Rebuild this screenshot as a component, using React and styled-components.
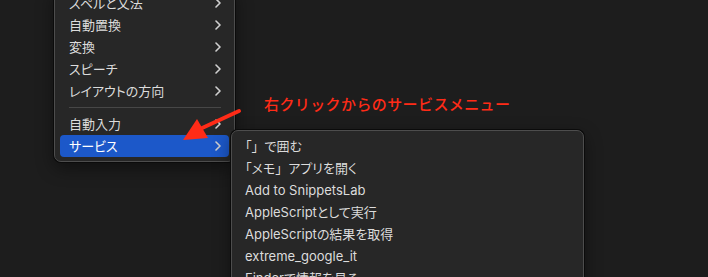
import styled, { createGlobalStyle } from "styled-components";

const GlobalStyle = createGlobalStyle`
	html, body {
		margin: 0;
		padding: 0;
		background: #1d1d1d;
	}
	body {
		width: 708px;
		height: 277px;
		overflow: hidden;
		font-family: Inter, "Noto Sans CJK JP", sans-serif;
		-webkit-font-smoothing: antialiased;
	}
`;

const Stage = styled.div`
	position: relative;
	width: 708px;
	height: 277px;
	overflow: hidden;
	display: flex;
	align-items: flex-start;
	padding-left: 54px;
	box-sizing: border-box;
`;

const Menu = styled.div`
	width: ${(props) => props.width}px;
	margin-top: ${(props) => props.top}px;
	margin-left: ${(props) => props.left || 0}px;
	padding: 4px 5px;
	box-sizing: border-box;
	background: #272727;
	border-radius: 7px;
	border: 1px solid #4d4d4d;
	box-shadow: 0 0 0 1px #0b0b0b, 0 6px 18px rgba(0, 0, 0, 0.45);
	display: flex;
	flex-direction: column;
	flex-shrink: 0;
`;

const Item = styled.div`
	height: 22px;
	padding: 0 8px 1px ${(props) => props.indent}px;
	box-sizing: border-box;
	border-radius: 4px;
	display: flex;
	align-items: center;
	justify-content: space-between;
	font-size: 13px;
	font-feature-settings: "palt";
	color: ${(props) => (props.active ? "#ffffff" : "#dcdcdc")};
	background: ${(props) => (props.active ? "#1c58c9" : "transparent")};
	white-space: nowrap;
`;

// closing bracket keeps its full-width box, as in the macOS menu
const Close = styled.span`
	font-feature-settings: normal;
`;

const Separator = styled.div`
	height: 1px;
	margin: 5px 8px 5px 9px;
	background: #474747;
`;

const Annotation = styled.div`
	position: absolute;
	left: 264px;
	top: 93px;
	font-family: "Noto Sans CJK JP", sans-serif;
	font-size: 15px;
	font-weight: 500;
	color: #ff2b17;
	letter-spacing: 0.4px;
`;

const ArrowLayer = styled.svg`
	position: absolute;
	left: 0;
	top: 0;
	pointer-events: none;
`;

function Chevron() {
	return (
		<svg width="6" height="10" viewBox="0 0 6 10">
			<polyline
				points="1,1 5,5 1,9"
				fill="none"
				stroke="#d0d0d0"
				strokeWidth="1.6"
				strokeLinecap="round"
				strokeLinejoin="round"
			/>
		</svg>
	);
}

function Label({ text }) {
	const parts = text.split("」");
	if (parts.length === 1) return <span>{text}</span>;
	return (
		<span>
			{parts[0]}
			<Close>」</Close>
			{parts[1]}
		</span>
	);
}

const mainItems = ["スペルと文法", "自動置換", "変換", "スピーチ", "レイアウトの方向"];

const services = [
	"「」で囲む",
	"「メモ」アプリを開く",
	"Add to SnippetsLab",
	"AppleScriptとして実行",
	"AppleScriptの結果を取得",
	"extreme_google_it",
	"Finderで情報を見る",
];

function App() {
	return (
		<>
			<GlobalStyle />
			<Stage>
				<Menu width={181} top={-13}>
					{mainItems.map((label) => (
						<Item key={label} indent={9}>
							{label}
							<Chevron />
						</Item>
					))}
					<Separator />
					<Item indent={9}>
						自動入力
						<Chevron />
					</Item>
					<Item indent={9} active>
						サービス
						<Chevron />
					</Item>
				</Menu>
				<Menu width={353} top={130} left={-4}>
					{services.map((label) => (
						<Item key={label} indent={8}>
							<Label text={label} />
						</Item>
					))}
				</Menu>
				<Annotation>右クリックからのサービスメニュー</Annotation>
				<ArrowLayer width="708" height="277">
					<line x1="239" y1="111" x2="200" y2="129" stroke="#ff2b17" strokeWidth="4" strokeLinecap="round" />
					<polygon points="183,140 197,119 208,138" fill="#ff2b17" />
				</ArrowLayer>
			</Stage>
		</>
	);
}

export default App;
